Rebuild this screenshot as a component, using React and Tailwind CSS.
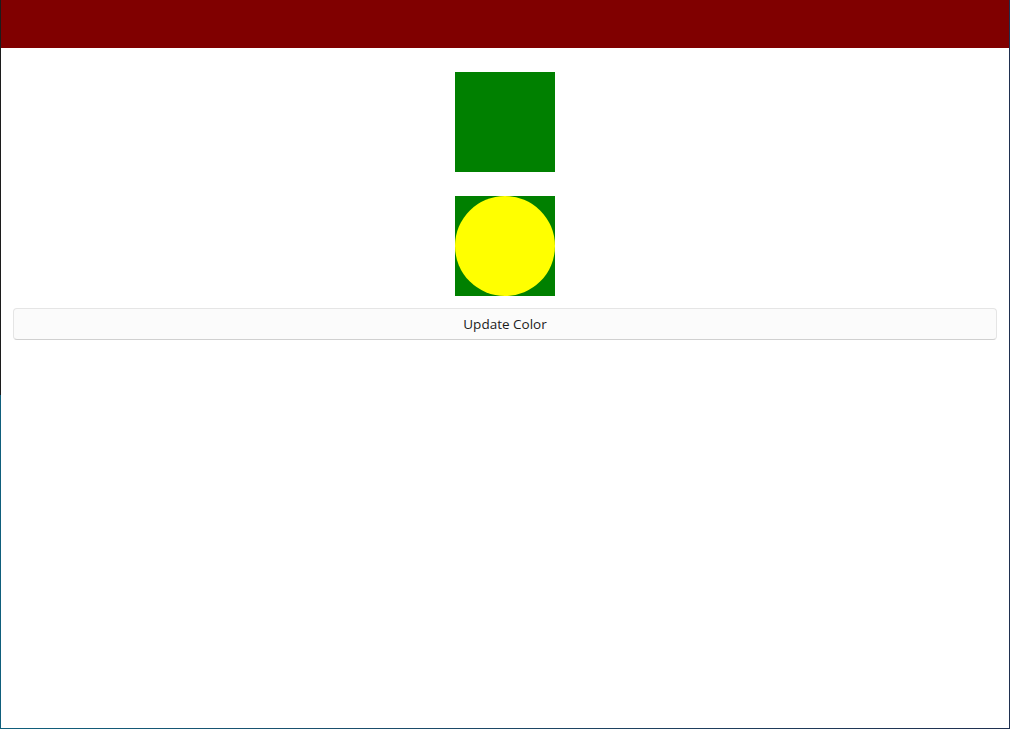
export default function App() {
  return (
    <div className="w-[1010px] h-[729px] flex flex-col bg-white" style={{ fontFamily: '"Open Sans", "Noto Sans", sans-serif' }}>
      <div className="flex flex-1">
        <div className="w-px flex flex-col">
          <div className="h-[395px] bg-[#1c1c1c]" />
          <div className="flex-1 bg-[#0f5f7c]" />
        </div>
        <div className="flex-1 flex flex-col">
          <div className="h-[48px] bg-[#800000]" />
          <div className="flex flex-col items-center pt-6">
            <div className="w-[100px] h-[100px] bg-[#008000]" />
            <div className="w-[100px] h-[100px] bg-[#008000] mt-6 flex">
              <div className="w-[100px] h-[100px] rounded-full bg-[#ffff00]" />
            </div>
          </div>
          <div className="px-3 mt-3">
            <button className="w-full h-8 rounded-[4px] border border-[#e5e5e5] border-b-[#d0d0d0] bg-[#fbfbfb] text-[13.5px] text-[#1b1b1b] flex items-center justify-center">
              Update Color
            </button>
          </div>
        </div>
        <div className="w-px bg-[#1f3050]" />
      </div>
      <div className="h-px bg-gradient-to-r from-[#0f5f7c] to-[#1f3050]" />
    </div>
  );
}
